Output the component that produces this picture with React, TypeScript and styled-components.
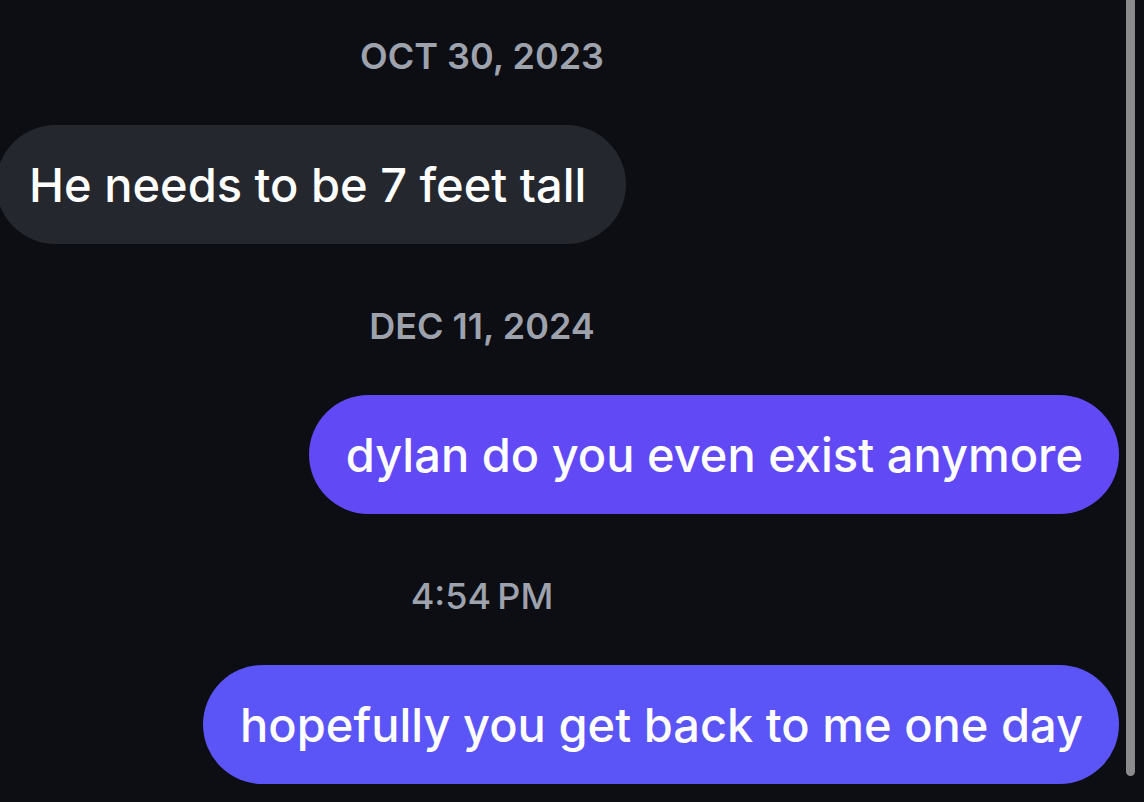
import styled, { createGlobalStyle } from "styled-components";

// sayfa arka planı ve font
const GlobalStyle = createGlobalStyle`
  html, body {
    margin: 0;
    padding: 0;
    background: #0c0e13;
    overflow: hidden;
  }
  body {
    font-family: Inter, "Noto Sans", "Liberation Sans", sans-serif;
    -webkit-font-smoothing: antialiased;
  }
`;

const Screen = styled.div`
  position: relative;
  width: 1144px;
  height: 802px;
  overflow: hidden;
  background: #0c0e13;
`;

const Thread = styled.div`
  display: flex;
  flex-direction: column;
  padding: 38px 25px 0 0;
`;

const Stamp = styled.div<{ $first?: boolean }>`
  margin-top: ${(p) => (p.$first ? "0" : "64px")};
  margin-bottom: 50px;
  padding-right: 155px;
  text-align: center;
  font-size: 36px;
  line-height: 37px;
  font-weight: 600;
  color: #9ea2ad;
  white-space: nowrap;
`;

const TimeStamp = styled(Stamp)`
  font-weight: 500;
`;

const Bubble = styled.div<{ $mine?: boolean; $bg?: string }>`
  align-self: ${(p) => (p.$mine ? "flex-end" : "flex-start")};
  margin-left: ${(p) => (p.$mine ? "0" : "-4px")};
  display: flex;
  align-items: center;
  height: 119px;
  box-sizing: border-box;
  padding: ${(p) => (p.$mine ? "0 36px 0 37px" : "0 40px 0 33px")};
  border-radius: 60px;
  background: ${(p) => p.$bg ?? "#25272e"};
  color: #ffffff;
  font-size: 47px;
  font-weight: 500;
  line-height: 1;
  white-space: nowrap;
`;

// sağdaki kaydırma çubuğu
const ScrollThumb = styled.div`
  position: absolute;
  top: -6px;
  right: 9px;
  width: 9px;
  height: 782px;
  border-radius: 5px;
  background: #8b8b8e;
`;

export default function App() {
  return (
    <>
      <GlobalStyle />
      <Screen>
        <Thread>
          <Stamp $first>OCT 30, 2023</Stamp>
          <Bubble>He needs to be 7 feet tall</Bubble>

          <Stamp>DEC 11, 2024</Stamp>
          <Bubble $mine $bg="#6249f6">dylan do you even exist anymore</Bubble>

          <TimeStamp>4:54&#8239;PM</TimeStamp>
          <Bubble $mine $bg="#5b54f6">hopefully you get back to me one day</Bubble>
        </Thread>
        <ScrollThumb />
      </Screen>
    </>
  );
}
